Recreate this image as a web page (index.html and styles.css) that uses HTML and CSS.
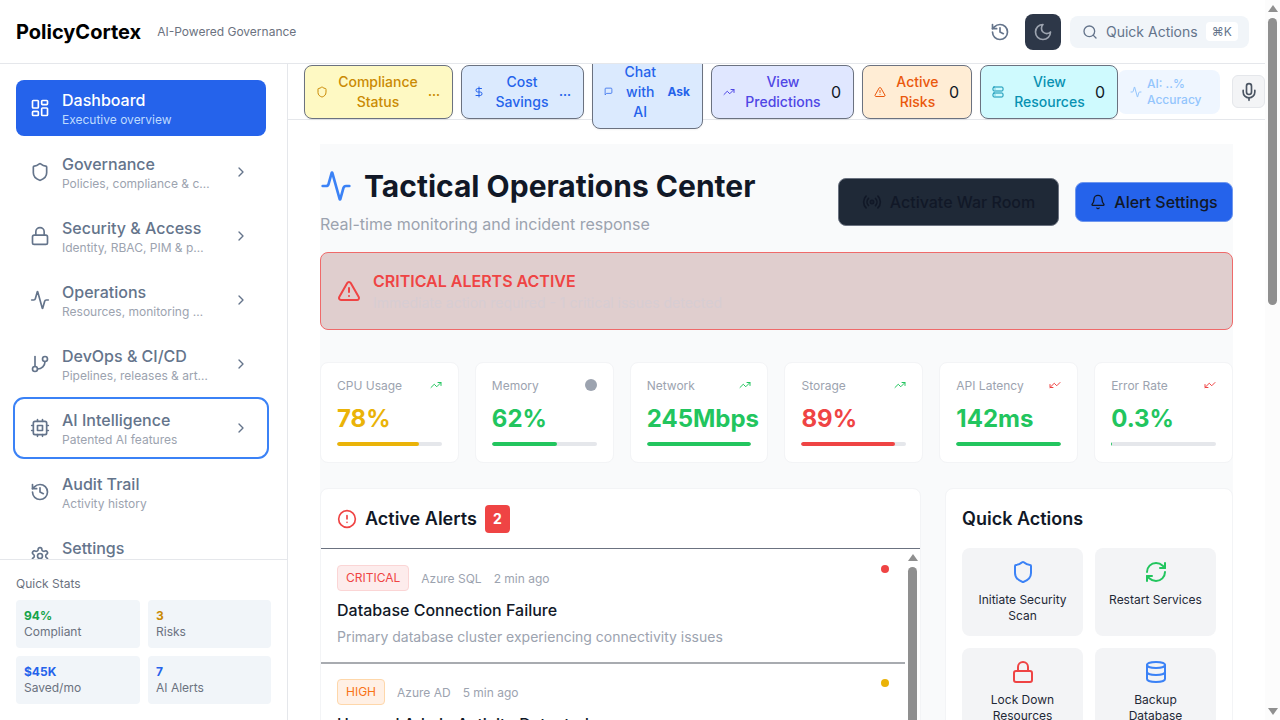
FILE: index.html
```html
<!DOCTYPE html>
<html lang="en">
<head>
    <meta charset="UTF-8">
    <meta name="viewport" content="width=device-width, initial-scale=1.0">
    <title>PolicyCortex</title>
    <link rel="stylesheet" href="styles.css">
</head>
<body>
    <div class="sb sb-page" aria-hidden="true"><i class="sb-up"></i><i class="sb-thumb"></i><i class="sb-down"></i></div>

    <header class="topbar">
        <div class="brand">
            <span class="brand-name">PolicyCortex</span>
            <span class="brand-tag">AI-Powered Governance</span>
        </div>
        <div class="topbar-tools">
            <svg class="ic ic-20 tool-history" viewBox="0 0 24 24"><path d="M3 12a9 9 0 1 0 9-9 9.75 9.75 0 0 0-6.74 2.74L3 8"/><path d="M3 3v5h5"/><path d="M12 7v5l4 2"/></svg>
            <button class="theme-btn"><svg class="ic ic-20" viewBox="0 0 24 24"><path d="M12 3a6 6 0 0 0 9 9 9 9 0 1 1-9-9Z"/></svg></button>
            <div class="search-btn">
                <svg class="ic ic-16" viewBox="0 0 24 24"><circle cx="11" cy="11" r="8"/><path d="m21 21-4.3-4.3"/></svg>
                <span class="search-label">Quick Actions</span>
                <kbd class="kbd">⌘K</kbd>
            </div>
        </div>
    </header>

    <div class="shell">
        <aside class="sidebar">
            <nav class="nav">
                <a class="nav-item active">
                    <svg class="ic ic-20" viewBox="0 0 24 24"><rect x="3" y="3" width="7" height="9" rx="1"/><rect x="14" y="3" width="7" height="5" rx="1"/><rect x="14" y="12" width="7" height="9" rx="1"/><rect x="3" y="16" width="7" height="5" rx="1"/></svg>
                    <div class="nav-text"><div class="nav-title">Dashboard</div><div class="nav-sub">Executive overview</div></div>
                </a>
                <a class="nav-item">
                    <svg class="ic ic-20" viewBox="0 0 24 24"><path d="M20 13c0 5-3.500 7.500-7.660 8.950a1 1 0 0 1-.67-.01C7.500 20.500 4 18 4 13V6a1 1 0 0 1 1-1c2 0 4.500-1.200 6.240-2.720a1.170 1.170 0 0 1 1.520 0C14.510 3.810 17 5 19 5a1 1 0 0 1 1 1z"/></svg>
                    <div class="nav-text"><div class="nav-title">Governance</div><div class="nav-sub">Policies, compliance &amp; cost management</div></div>
                    <svg class="ic ic-16 chev" viewBox="0 0 24 24"><path d="m9 18 6-6-6-6"/></svg>
                </a>
                <a class="nav-item">
                    <svg class="ic ic-20" viewBox="0 0 24 24"><rect x="3" y="11" width="18" height="11" rx="2"/><path d="M7 11V7a5 5 0 0 1 10 0v4"/></svg>
                    <div class="nav-text"><div class="nav-title">Security &amp; Access</div><div class="nav-sub">Identity, RBAC, PIM &amp; policies</div></div>
                    <svg class="ic ic-16 chev" viewBox="0 0 24 24"><path d="m9 18 6-6-6-6"/></svg>
                </a>
                <a class="nav-item">
                    <svg class="ic ic-20" viewBox="0 0 24 24"><path d="M22 12h-2.480a2 2 0 0 0-1.930 1.460l-2.350 8.360a.25.25 0 0 1-.48 0L9.240 2.180a.25.25 0 0 0-.48 0l-2.350 8.360A2 2 0 0 1 4.490 12H2"/></svg>
                    <div class="nav-text"><div class="nav-title">Operations</div><div class="nav-sub">Resources, monitoring &amp; alerts</div></div>
                    <svg class="ic ic-16 chev" viewBox="0 0 24 24"><path d="m9 18 6-6-6-6"/></svg>
                </a>
                <a class="nav-item">
                    <svg class="ic ic-20" viewBox="0 0 24 24"><path d="M6 3v12"/><circle cx="18" cy="6" r="3"/><circle cx="6" cy="18" r="3"/><path d="M18 9a9 9 0 0 1-9 9"/></svg>
                    <div class="nav-text"><div class="nav-title">DevOps &amp; CI/CD</div><div class="nav-sub">Pipelines, releases &amp; artifacts</div></div>
                    <svg class="ic ic-16 chev" viewBox="0 0 24 24"><path d="m9 18 6-6-6-6"/></svg>
                </a>
                <a class="nav-item focused">
                    <svg class="ic ic-20" viewBox="0 0 24 24"><rect x="4" y="4" width="16" height="16" rx="2"/><rect x="9" y="9" width="6" height="6"/><path d="M15 2v2M15 20v2M2 15h2M2 9h2M20 15h2M20 9h2M9 2v2M9 20v2"/></svg>
                    <div class="nav-text"><div class="nav-title">AI Intelligence</div><div class="nav-sub">Patented AI features</div></div>
                    <svg class="ic ic-16 chev" viewBox="0 0 24 24"><path d="m9 18 6-6-6-6"/></svg>
                </a>
                <a class="nav-item">
                    <svg class="ic ic-20" viewBox="0 0 24 24"><path d="M3 12a9 9 0 1 0 9-9 9.75 9.75 0 0 0-6.74 2.74L3 8"/><path d="M3 3v5h5"/><path d="M12 7v5l4 2"/></svg>
                    <div class="nav-text"><div class="nav-title">Audit Trail</div><div class="nav-sub">Activity history</div></div>
                </a>
                <a class="nav-item">
                    <svg class="ic ic-20" viewBox="0 0 24 24"><path d="M12.220 2h-.44a2 2 0 0 0-2 2v.18a2 2 0 0 1-1 1.730l-.43.250a2 2 0 0 1-2 0l-.15-.08a2 2 0 0 0-2.730.730l-.22.380a2 2 0 0 0 .73 2.730l.15.100a2 2 0 0 1 1 1.720v.51a2 2 0 0 1-1 1.740l-.15.090a2 2 0 0 0-.73 2.730l.22.380a2 2 0 0 0 2.730.730l.15-.08a2 2 0 0 1 2 0l.43.250a2 2 0 0 1 1 1.730V20a2 2 0 0 0 2 2h.44a2 2 0 0 0 2-2v-.18a2 2 0 0 1 1-1.730l.43-.250a2 2 0 0 1 2 0l.15.080a2 2 0 0 0 2.730-.730l.22-.390a2 2 0 0 0-.73-2.730l-.15-.080a2 2 0 0 1-1-1.740v-.5a2 2 0 0 1 1-1.740l.15-.090a2 2 0 0 0 .73-2.730l-.22-.380a2 2 0 0 0-2.730-.730l-.15.080a2 2 0 0 1-2 0l-.43-.250a2 2 0 0 1-1-1.730V4a2 2 0 0 0-2-2z"/><circle cx="12" cy="12" r="3"/></svg>
                    <div class="nav-text"><div class="nav-title">Settings</div><div class="nav-sub">Preferences</div></div>
                </a>
            </nav>
            <div class="quick-stats">
                <div class="qs-label">Quick Stats</div>
                <div class="qs-grid">
                    <div class="qs-card"><div class="qs-value qs-green">94%</div><div class="qs-name">Compliant</div></div>
                    <div class="qs-card"><div class="qs-value qs-amber">3</div><div class="qs-name">Risks</div></div>
                    <div class="qs-card"><div class="qs-value blue">$45K</div><div class="qs-name">Saved/mo</div></div>
                    <div class="qs-card"><div class="qs-value blue">7</div><div class="qs-name">AI Alerts</div></div>
                </div>
            </div>
        </aside>

        <main class="main">
            <div class="action-bar">
                <button class="chip chip-yellow w-compliance">
                    <svg class="ic ic-12" viewBox="0 0 24 24"><path d="M20 13c0 5-3.500 7.500-7.660 8.950a1 1 0 0 1-.67-.01C7.500 20.500 4 18 4 13V6a1 1 0 0 1 1-1c2 0 4.500-1.200 6.240-2.720a1.170 1.170 0 0 1 1.520 0C14.510 3.810 17 5 19 5a1 1 0 0 1 1 1z"/></svg>
                    <span class="chip-label">Compliance Status</span><b class="chip-count">...</b>
                </button>
                <button class="chip chip-blue w-cost">
                    <svg class="ic ic-12" viewBox="0 0 24 24"><path d="M12 2v20"/><path d="M17 5H9.500a3.500 3.500 0 0 0 0 7h5a3.500 3.500 0 0 1 0 7H6"/></svg>
                    <span class="chip-label">Cost Savings</span><b class="chip-count">...</b>
                </button>
                <button class="chip chip-blue w-chat">
                    <svg class="ic" viewBox="0 0 24 24"><path d="M21 15a2 2 0 0 1-2 2H7l-4 4V5a2 2 0 0 1 2-2h14a2 2 0 0 1 2 2z"/></svg>
                    <span class="chip-label">Chat with AI</span><b class="chip-count">Ask</b>
                </button>
                <button class="chip chip-indigo w-pred">
                    <svg class="ic ic-12" viewBox="0 0 24 24"><path d="M22 7 13.500 15.500 8.500 10.500 2 17"/><path d="M16 7h6v6"/></svg>
                    <span class="chip-label">View Predictions</span><span class="chip-num">0</span>
                </button>
                <button class="chip chip-orange w-risks">
                    <svg class="ic ic-12" viewBox="0 0 24 24"><path d="m21.730 18-8-14a2 2 0 0 0-3.480 0l-8 14A2 2 0 0 0 4 21h16a2 2 0 0 0 1.730-3"/><path d="M12 9v4"/><path d="M12 17h.01"/></svg>
                    <span class="chip-label">Active Risks</span><span class="chip-num">0</span>
                </button>
                <button class="chip chip-cyan w-res">
                    <svg class="ic ic-12" viewBox="0 0 24 24"><rect x="2" y="2" width="20" height="8" rx="2"/><rect x="2" y="14" width="20" height="8" rx="2"/><path d="M6 6h.01M6 18h.01"/></svg>
                    <span class="chip-label">View Resources</span><span class="chip-num">0</span>
                </button>
                <div class="ai-pill">
                    <svg class="ic ic-12" viewBox="0 0 24 24"><path d="M22 12h-2.480a2 2 0 0 0-1.930 1.460l-2.350 8.360a.25.25 0 0 1-.48 0L9.240 2.180a.25.25 0 0 0-.48 0l-2.350 8.360A2 2 0 0 1 4.490 12H2"/></svg>
                    <span>AI: ..%<br>Accuracy</span>
                </div>
                <button class="mic-btn"><svg class="ic ic-20" viewBox="0 0 24 24"><path d="M12 2a3 3 0 0 0-3 3v7a3 3 0 0 0 6 0V5a3 3 0 0 0-3-3Z"/><path d="M19 10v2a7 7 0 0 1-14 0v-2"/><path d="M12 19v3"/></svg></button>
            </div>

            <div class="content">
                <section class="page-head">
                    <div>
                        <h1 class="page-title">
                            <svg class="ic ic-32 c-blue" viewBox="0 0 24 24"><path d="M22 12h-2.480a2 2 0 0 0-1.930 1.460l-2.350 8.360a.25.25 0 0 1-.48 0L9.240 2.180a.25.25 0 0 0-.48 0l-2.350 8.360A2 2 0 0 1 4.490 12H2"/></svg>
                            Tactical Operations Center
                        </h1>
                        <p class="page-sub">Real-time monitoring and incident response</p>
                    </div>
                    <div class="page-actions">
                        <button class="btn btn-dark">
                            <svg class="ic ic-20" viewBox="0 0 24 24"><path d="M4.900 19.100C1 15.200 1 8.800 4.900 4.900"/><path d="M7.800 16.200c-2.300-2.300-2.300-6.100 0-8.500"/><circle cx="12" cy="12" r="2"/><path d="M16.200 7.800c2.300 2.300 2.300 6.100 0 8.500"/><path d="M19.100 4.900C23 8.800 23 15.100 19.100 19"/></svg>
                            Activate War Room
                        </button>
                        <button class="btn btn-blue">
                            <svg class="ic ic-16" viewBox="0 0 24 24"><path d="M10.268 21a2 2 0 0 0 3.464 0"/><path d="M3.262 15.326A1 1 0 0 0 4 17h16a1 1 0 0 0 .74-1.673C19.410 13.956 18 12.499 18 8A6 6 0 0 0 6 8c0 4.499-1.411 5.956-2.738 7.326"/></svg>
                            Alert Settings
                        </button>
                    </div>
                </section>

                <section class="crit-banner">
                    <svg class="ic ic-24 c-red" viewBox="0 0 24 24"><path d="m21.730 18-8-14a2 2 0 0 0-3.480 0l-8 14A2 2 0 0 0 4 21h16a2 2 0 0 0 1.730-3"/><path d="M12 9v4"/><path d="M12 17h.01"/></svg>
                    <div>
                        <div class="crit-title">CRITICAL ALERTS ACTIVE</div>
                        <div class="crit-sub">Immediate action required - 1 critical issues detected</div>
                    </div>
                </section>

                <section class="metrics">
                    <div class="metric">
                        <div class="metric-top"><span>CPU Usage</span><svg class="ic ic-12 c-green" viewBox="0 0 24 24"><path d="M22 7 13.500 15.500 8.500 10.500 2 17"/><path d="M16 7h6v6"/></svg></div>
                        <div class="metric-val amber">78%</div>
                        <div class="track"><div class="fill bg-amber" style="width:78%"></div></div>
                    </div>
                    <div class="metric">
                        <div class="metric-top"><span>Memory</span><i class="flat-dot"></i></div>
                        <div class="metric-val green">62%</div>
                        <div class="track"><div class="fill bg-green" style="width:62%"></div></div>
                    </div>
                    <div class="metric">
                        <div class="metric-top"><span>Network</span><svg class="ic ic-12 c-green" viewBox="0 0 24 24"><path d="M22 7 13.500 15.500 8.500 10.500 2 17"/><path d="M16 7h6v6"/></svg></div>
                        <div class="metric-val green">245Mbps</div>
                        <div class="track"><div class="fill bg-green" style="width:100%"></div></div>
                    </div>
                    <div class="metric">
                        <div class="metric-top"><span>Storage</span><svg class="ic ic-12 c-green" viewBox="0 0 24 24"><path d="M22 7 13.500 15.500 8.500 10.500 2 17"/><path d="M16 7h6v6"/></svg></div>
                        <div class="metric-val red">89%</div>
                        <div class="track"><div class="fill bg-red" style="width:89%"></div></div>
                    </div>
                    <div class="metric">
                        <div class="metric-top"><span>API Latency</span><svg class="ic ic-12 c-red" viewBox="0 0 24 24"><path d="M2 17 10.500 8.500 15.500 13.500 22 7"/><path d="M8 17H2v-6"/></svg></div>
                        <div class="metric-val green">142ms</div>
                        <div class="track"><div class="fill bg-green" style="width:100%"></div></div>
                    </div>
                    <div class="metric">
                        <div class="metric-top"><span>Error Rate</span><svg class="ic ic-12 c-red" viewBox="0 0 24 24"><path d="M2 17 10.500 8.500 15.500 13.500 22 7"/><path d="M8 17H2v-6"/></svg></div>
                        <div class="metric-val green">0.3%</div>
                        <div class="track"><div class="fill bg-green" style="width:1%"></div></div>
                    </div>
                </section>

                <section class="lower">
                    <div class="card alerts-card">
                        <div class="alerts-head">
                            <svg class="ic ic-20 c-red" viewBox="0 0 24 24"><circle cx="12" cy="12" r="10"/><path d="M12 8v4"/><path d="M12 16h.01"/></svg>
                            <h2 class="card-title">Active Alerts</h2>
                            <span class="count-badge">2</span>
                        </div>
                        <div class="alerts-list">
                            <div class="alerts-items">
                                <div class="alert-row">
                                    <div>
                                        <div class="alert-meta"><span class="sev sev-critical">CRITICAL</span><span>Azure SQL</span><span>2 min ago</span></div>
                                        <div class="alert-title">Database Connection Failure</div>
                                        <div class="alert-desc">Primary database cluster experiencing connectivity issues</div>
                                    </div>
                                    <i class="alert-dot bg-red"></i>
                                </div>
                                <div class="alert-row">
                                    <div>
                                        <div class="alert-meta"><span class="sev sev-high">HIGH</span><span>Azure AD</span><span>5 min ago</span></div>
                                        <div class="alert-title">Unusual Admin Activity Detected</div>
                                        <div class="alert-desc">Multiple failed sign-in attempts from an unknown location</div>
                                    </div>
                                    <i class="alert-dot bg-amber"></i>
                                </div>
                            </div>
                            <div class="sb sb-inner" aria-hidden="true"><i class="sb-up"></i><i class="sb-thumb"></i><i class="sb-down"></i></div>
                        </div>
                    </div>
                    <div class="card actions-card">
                        <h2 class="card-title">Quick Actions</h2>
                        <div class="tile-grid">
                            <button class="tile">
                                <svg class="ic ic-24 c-blue" viewBox="0 0 24 24"><path d="M20 13c0 5-3.500 7.500-7.660 8.950a1 1 0 0 1-.67-.01C7.500 20.500 4 18 4 13V6a1 1 0 0 1 1-1c2 0 4.500-1.200 6.240-2.720a1.170 1.170 0 0 1 1.520 0C14.510 3.810 17 5 19 5a1 1 0 0 1 1 1z"/></svg>
                                Initiate Security Scan
                            </button>
                            <button class="tile">
                                <svg class="ic ic-24 c-green" viewBox="0 0 24 24"><path d="M3 12a9 9 0 0 1 9-9 9.750 9.750 0 0 1 6.740 2.740L21 8"/><path d="M21 3v5h-5"/><path d="M21 12a9 9 0 0 1-9 9 9.750 9.750 0 0 1-6.740-2.740L3 16"/><path d="M8 16H3v5"/></svg>
                                Restart Services
                            </button>
                            <button class="tile">
                                <svg class="ic ic-24 c-red" viewBox="0 0 24 24"><rect x="3" y="11" width="18" height="11" rx="2"/><path d="M7 11V7a5 5 0 0 1 10 0v4"/></svg>
                                Lock Down Resources
                            </button>
                            <button class="tile">
                                <svg class="ic ic-24 c-blue" viewBox="0 0 24 24"><ellipse cx="12" cy="5" rx="9" ry="3"/><path d="M3 5v14a9 3 0 0 0 18 0V5"/><path d="M3 12a9 3 0 0 0 18 0"/></svg>
                                Backup Database
                            </button>
                        </div>
                    </div>
                </section>
            </div>
        </main>
    </div>
</body>
</html>
```

FILE: styles.css
```css
* {
    box-sizing: border-box;
}

body {
    margin: 0;
    padding-right: 15px;
    font-family: Inter, "Liberation Sans", sans-serif;
    background-color: #fff;
    color: #111827;
}

h1, h2, p {
    margin: 0;
}

button {
    font-family: inherit;
    cursor: pointer;
}

.ic {
    fill: none;
    stroke: currentColor;
    stroke-width: 2;
    stroke-linecap: round;
    stroke-linejoin: round;
    flex: none;
}
.ic-12 { width: 12px; height: 12px; }
.ic-16 { width: 16px; height: 16px; }
.ic-20 { width: 20px; height: 20px; }
.ic-24 { width: 24px; height: 24px; }
.ic-32 { width: 32px; height: 32px; }

.c-blue { color: #3b82f6; }
.c-green { color: #22c55e; }
.c-red { color: #ef4444; }
.green { color: #22c55e; }
.amber { color: #eab308; }
.red { color: #ef4444; }
.blue { color: #2563eb; }
.bg-green { background-color: #22c55e; }
.bg-amber { background-color: #eab308; }
.bg-red { background-color: #ef4444; }

/* scrollbars */
.sb {
    width: 15px;
    padding-top: 5px;
    display: flex;
    flex-direction: column;
    align-items: center;
    background-color: #fcfcfc;
}

.sb-page {
    position: fixed;
    top: 0;
    right: 0;
    bottom: 0;
    z-index: 30;
}

.sb-inner {
    flex: none;
    background-color: #fff;
}

.sb-up, .sb-down {
    flex: none;
    width: 0;
    height: 0;
    border-left: 5px solid transparent;
    border-right: 5px solid transparent;
}

.sb-up {
    border-bottom: 7px solid #8f8f8f;
}

.sb-down {
    margin-top: auto;
    margin-bottom: 5px;
    border-top: 7px solid #8f8f8f;
}

.sb-thumb {
    flex: none;
    width: 9px;
    height: 287px;
    margin-top: 6px;
    border-radius: 5px;
    background-color: #8f8f8f;
}

/* top header */
.topbar {
    position: sticky;
    top: 0;
    z-index: 20;
    height: 64px;
    padding: 0 16px;
    display: flex;
    align-items: center;
    justify-content: space-between;
    background-color: #fff;
    border-bottom: 1px solid #e5e7eb;
}

.brand {
    display: flex;
    align-items: center;
    gap: 16px;
}

.brand-name {
    font-size: 20px;
    font-weight: 700;
    color: #000;
}

.brand-tag {
    font-size: 12px;
    color: #6b7280;
}

.topbar-tools {
    display: flex;
    align-items: center;
    gap: 9px;
}

.tool-history {
    color: #64748b;
    margin-right: 6px;
}

.theme-btn {
    width: 36px;
    height: 36px;
    display: flex;
    align-items: center;
    justify-content: center;
    border: none;
    border-radius: 8px;
    background-color: #2d3748;
    color: #9ca3af;
}

.search-btn {
    width: 179px;
    height: 32px;
    padding: 0 12px;
    display: flex;
    align-items: center;
    gap: 8px;
    border-radius: 8px;
    background-color: #f1f5f9;
    font-size: 14px;
    color: #64748b;
}

.search-label {
    white-space: nowrap;
}

.kbd {
    margin-left: auto;
    padding: 2px 6px;
    border-radius: 4px;
    background-color: #fff;
    font-family: inherit;
    font-size: 12px;
}

/* sidebar */
.shell {
    display: flex;
    align-items: flex-start;
}

.sidebar {
    position: sticky;
    top: 64px;
    flex: none;
    width: 288px;
    height: 656px;
    display: flex;
    flex-direction: column;
    background-color: #fff;
    border-right: 1px solid #e5e7eb;
}

.nav {
    flex: 1;
    min-height: 0;
    overflow: hidden;
    padding: 16px 21px 16px 16px;
    display: flex;
    flex-direction: column;
    gap: 8px;
}

.nav-item {
    flex: none;
    height: 56px;
    padding: 0 17px 0 14px;
    display: flex;
    align-items: center;
    gap: 12px;
    border-radius: 8px;
    color: #64748b;
}

.nav-item.active {
    background-color: #2563eb;
    color: #fff;
}

.nav-item.focused {
    outline: 2px solid #3b82f6;
    outline-offset: 1px;
}

.nav-text {
    flex: 1;
    min-width: 0;
}

.nav-title {
    font-size: 16px;
    font-weight: 500;
    line-height: 24px;
}

.nav-sub {
    max-width: 148px;
    font-size: 12px;
    line-height: 16px;
    color: #9ca3af;
    white-space: nowrap;
    overflow: hidden;
    text-overflow: ellipsis;
}

.active .nav-sub {
    color: #bfdbfe;
}

.quick-stats {
    flex: none;
    height: 161px;
    padding: 16px;
    background-color: #fff;
    border-top: 1px solid #e5e7eb;
}

.qs-label {
    font-size: 12px;
    line-height: 16px;
    color: #6b7280;
    margin-bottom: 8px;
}

.qs-grid {
    display: grid;
    grid-template-columns: 124px 123px;
    gap: 8px;
}

.qs-card {
    height: 48px;
    padding: 8px;
    border-radius: 4px;
    background-color: #f1f5f9;
    font-size: 12px;
    line-height: 16px;
}

.qs-value {
    font-weight: 700;
}

.qs-green {
    color: #16a34a;
}

.qs-amber {
    color: #ca8a04;
}

.qs-name {
    color: #6b7280;
}

/* main column */
.main {
    flex: 1;
    min-width: 0;
    min-height: 1652px;
}

.action-bar {
    position: relative;
    height: 56px;
    padding: 0 0 0 16px;
    display: flex;
    align-items: center;
    gap: 8px;
    border-bottom: 1px solid #e5e7eb;
}

.chip {
    flex: none;
    min-height: 54px;
    padding: 6px 12px 6px 11px;
    display: flex;
    align-items: center;
    gap: 8px;
    border: 1px solid #6b7280;
    border-radius: 8px;
    box-shadow: 0 1px 2px rgba(0, 0, 0, 0.05);
    font-size: 14px;
    line-height: 20px;
    font-weight: 500;
}

.chip-label {
    flex: 1;
    text-align: center;
}

.chip-count {
    font-size: 12px;
    font-weight: 700;
}

.chip-num {
    font-size: 16px;
    font-weight: 400;
    color: #111827;
}

.chip-yellow { background-color: #fef9c3; color: #ca8a04; }
.chip-blue { background-color: #dbeafe; color: #2563eb; }
.chip-indigo { background-color: #e0e7ff; color: #4f46e5; }
.chip-orange { background-color: #ffedd5; color: #ea580c; }
.chip-cyan { background-color: #cffafe; color: #0891b2; }

.w-compliance { width: 149px; }
.w-cost { width: 123px; }
.w-chat { width: 111px; }
.w-chat .ic { width: 9px; height: 9px; }
.w-pred { width: 143px; }
.w-risks { width: 110px; }
.w-res { width: 138px; }

.ai-pill {
    flex: none;
    width: 102px;
    height: 44px;
    margin-left: -8px;
    padding: 0 12px;
    display: flex;
    align-items: center;
    gap: 5px;
    border-radius: 8px;
    background-color: #eff6ff;
    color: #93c5fd;
    font-size: 12px;
    line-height: 16px;
    font-weight: 500;
}

.mic-btn {
    flex: none;
    width: 33px;
    height: 33px;
    margin-left: 4px;
    display: flex;
    align-items: center;
    justify-content: center;
    padding: 0;
    border: 1px solid #e5e7eb;
    border-radius: 6px;
    background-color: #f3f4f6;
    color: #4b5563;
}

.content {
    margin: 24px 32px 0;
    min-height: 1572px;
    padding-top: 24px;
    background-color: #f9fafb;
}

.page-head {
    display: flex;
    align-items: center;
    justify-content: space-between;
    margin-bottom: 16px;
}

.page-title {
    display: flex;
    align-items: center;
    gap: 12px;
    font-size: 30px;
    line-height: 36px;
    font-weight: 700;
    color: #111827;
}

.page-sub {
    margin-top: 8px;
    font-size: 16px;
    line-height: 24px;
    color: #9ca3af;
}

.page-actions {
    display: flex;
    align-items: center;
    gap: 16px;
}

.btn {
    display: flex;
    align-items: center;
    justify-content: center;
    gap: 8px;
    padding: 0;
    border-radius: 8px;
    font-size: 16px;
    line-height: 24px;
    font-weight: 500;
    color: #111827;
}

.btn-dark {
    width: 221px;
    height: 48px;
    background-color: #1f2937;
    border: 1px solid #6b7280;
}

.btn-blue {
    width: 158px;
    height: 40px;
    background-color: #2563eb;
    border: 1px solid #6f97ee;
}

.crit-banner {
    padding: 16px;
    display: flex;
    align-items: center;
    gap: 12px;
    border: 1px solid #ef6a6a;
    border-radius: 8px;
    background-color: #e0cece;
}

.crit-title {
    font-size: 16px;
    line-height: 24px;
    font-weight: 600;
    color: #ef4444;
}

.crit-sub {
    font-size: 14px;
    line-height: 20px;
    color: #d7cdd3;
}

/* metric cards */
.metrics {
    margin-top: 32px;
    display: grid;
    grid-template-columns: repeat(6, minmax(0, 1fr));
    gap: 16px;
}

.metric {
    height: 101px;
    padding: 16px;
    background-color: #fff;
    border: 1px solid #f3f4f6;
    border-radius: 8px;
}

.metric-top {
    height: 12px;
    display: flex;
    align-items: center;
    justify-content: space-between;
    font-size: 12px;
    color: #9ca3af;
}

.flat-dot {
    width: 12px;
    height: 12px;
    border-radius: 50%;
    background-color: #9ca3af;
}

.metric-val {
    margin-top: 12px;
    font-size: 24px;
    line-height: 32px;
    font-weight: 700;
    white-space: nowrap;
}

.track {
    margin-top: 7px;
    height: 4px;
    border-radius: 2px;
    background-color: #e5e7eb;
    overflow: hidden;
}

.fill {
    height: 100%;
    border-radius: 2px;
}

/* lower cards */
.lower {
    margin-top: 25px;
    display: grid;
    grid-template-columns: minmax(0, 1fr) 288px;
    gap: 24px;
    align-items: start;
}

.card {
    background-color: #fff;
    border: 1px solid #f3f4f6;
    border-radius: 8px;
}

.card-title {
    font-size: 18px;
    line-height: 28px;
    font-weight: 600;
    color: #111827;
}

.alerts-head {
    height: 60px;
    padding: 0 16px;
    display: flex;
    align-items: center;
    gap: 8px;
    border-bottom: 1px solid #6b7280;
}

.count-badge {
    width: 25px;
    height: 28px;
    display: flex;
    align-items: center;
    justify-content: center;
    border-radius: 4px;
    background-color: #ef4444;
    color: #fff;
    font-size: 14px;
    font-weight: 700;
}

.alerts-list {
    height: 400px;
    display: flex;
}

.alerts-items {
    flex: 1;
    min-width: 0;
}

.alert-row {
    padding: 16px 16px 15px;
    display: flex;
    justify-content: space-between;
    align-items: flex-start;
    border-bottom: 2px solid #a8abb0;
}

.alert-row + .alert-row {
    padding-top: 15px;
}

.alert-meta {
    display: flex;
    align-items: center;
    gap: 12px;
    font-size: 12px;
    color: #9ca3af;
}

.sev {
    padding: 4px 8px;
    line-height: 16px;
    border: 1px solid;
    border-radius: 4px;
}

.sev-critical {
    background-color: #fdecec;
    border-color: #fbd5d5;
    color: #ef4444;
}

.sev-high {
    background-color: #fff0e5;
    border-color: #fed7aa;
    color: #f97316;
}

.alert-title {
    margin-top: 7px;
    font-size: 16px;
    line-height: 24px;
    font-weight: 500;
}

.alert-desc {
    margin-top: 5px;
    font-size: 14px;
    line-height: 20px;
    color: #9ca3af;
}

.alert-dot {
    flex: none;
    width: 8px;
    height: 8px;
    border-radius: 50%;
}

.actions-card {
    padding: 16px;
}

.tile-grid {
    margin-top: 15px;
    display: grid;
    grid-template-columns: repeat(2, minmax(0, 1fr));
    gap: 12px;
}

.tile {
    padding: 12px;
    display: flex;
    flex-direction: column;
    align-items: center;
    gap: 8px;
    border: none;
    border-radius: 8px;
    background-color: #f3f4f6;
    font-size: 12px;
    line-height: 16px;
    font-weight: 400;
    color: #1f2937;
}
```
